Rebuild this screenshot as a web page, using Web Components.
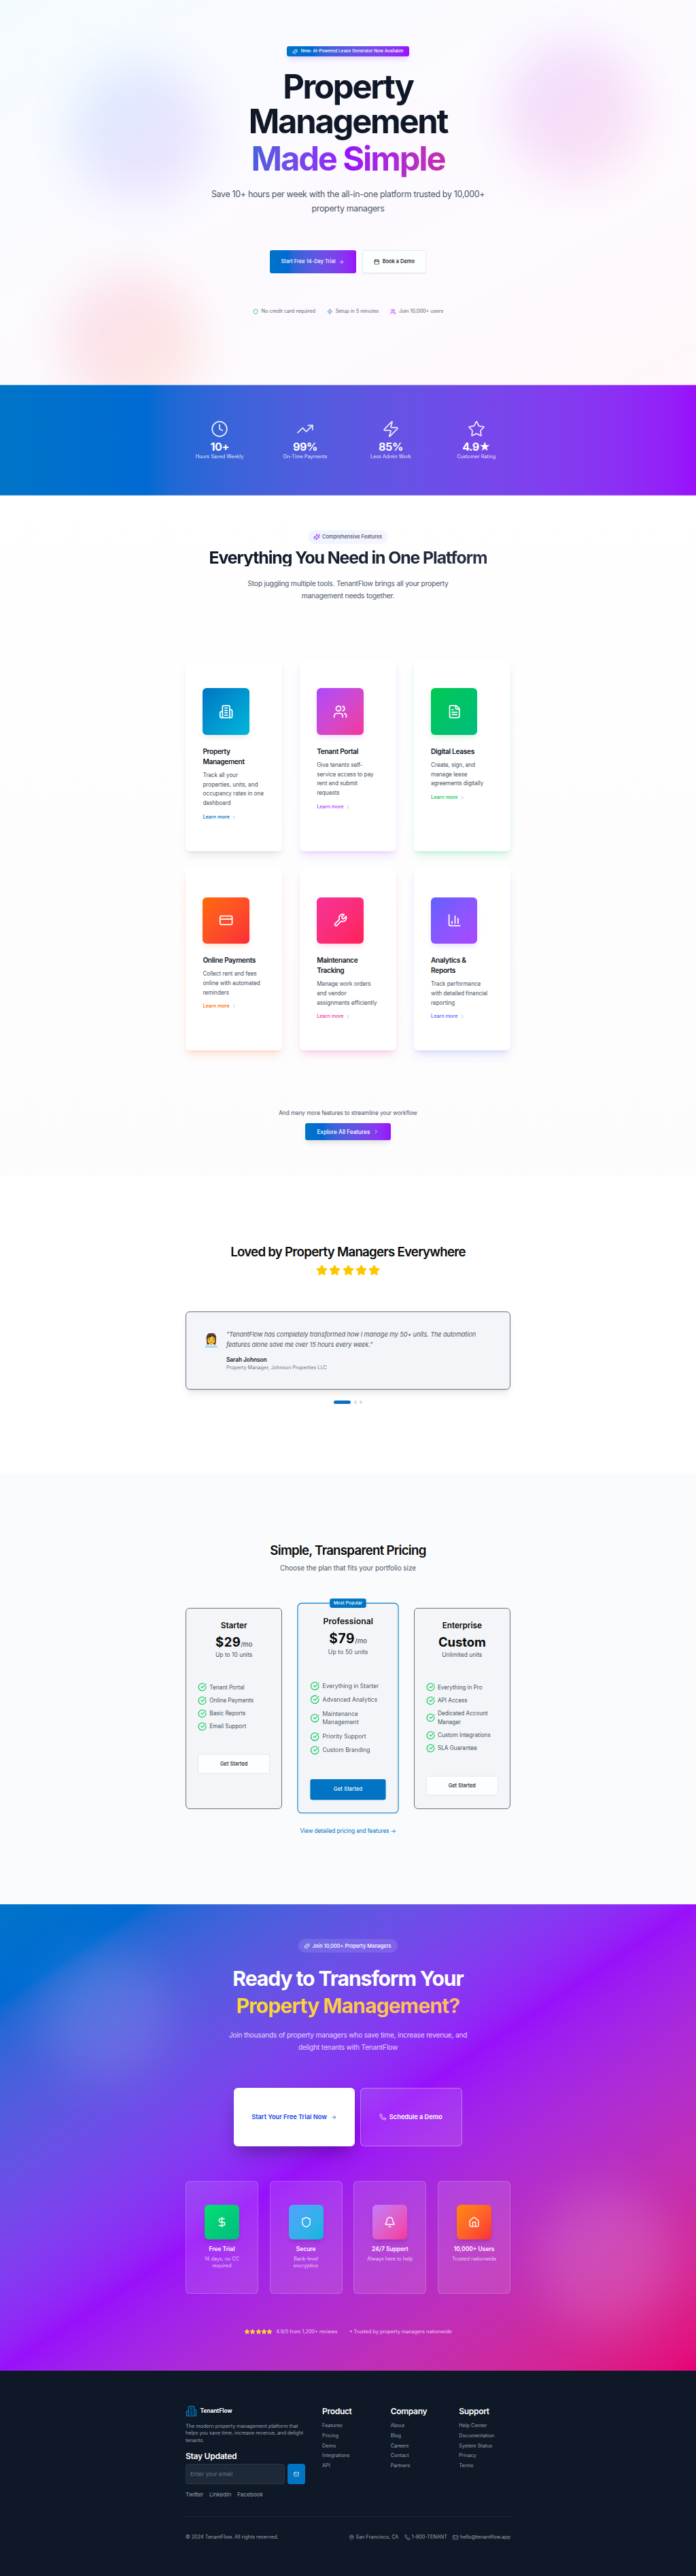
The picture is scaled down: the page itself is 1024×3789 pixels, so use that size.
<!DOCTYPE html>
<html lang="en">
<head>
<meta charset="utf-8">
<title>TenantFlow</title>
<style>
html,body{margin:0;padding:0}
body{font-family:Inter,"Liberation Sans",sans-serif;color:#0a0a0a;background:#fff;width:1024px;
--primary:#0175c3;--primary-wide:oklch(0.53 0.185 238);--purple:#9810fa;--pink:#e60076;--ink:#101828;--muted:#4a5565}
</style>
</head>
<body>
<tf-hero></tf-hero>
<tf-stats></tf-stats>
<tf-features></tf-features>
<tf-testimonials></tf-testimonials>
<tf-pricing></tf-pricing>
<tf-cta></tf-cta>
<tf-footer></tf-footer>
<script>
const BASE = `*{box-sizing:border-box}:host{display:block;box-sizing:border-box}h1,h2,h3,h4,p,ul,li,blockquote{margin:0;padding:0}`;
const define = (name, render) => customElements.define(name, class extends HTMLElement {
  connectedCallback() {
    if (this.shadowRoot) return;
    this.attachShadow({mode:"open"}).innerHTML = render(this);
  }
});

const ICONS = {
  sparkles:'<path d="M9.94 15.5A2 2 0 0 0 8.5 14.06l-6.13-1.58a.5.5 0 0 1 0-.96L8.5 9.94A2 2 0 0 0 9.94 8.5l1.58-6.13a.5.5 0 0 1 .96 0L14.06 8.5A2 2 0 0 0 15.5 9.94l6.13 1.58a.5.5 0 0 1 0 .96L15.5 14.06a2 2 0 0 0-1.44 1.44l-1.58 6.13a.5.5 0 0 1-.96 0z"/><path d="M20 3v4M22 5h-4M4 17v2M5 18H3"/>',
  arrow:'<path d="M5 12h14M12 5l7 7-7 7"/>',
  calendar:'<path d="M8 2v4M16 2v4"/><rect width="18" height="18" x="3" y="4" rx="2"/><path d="M3 10h18"/>',
  shield:'<path d="M20 13c0 5-3.5 7.5-7.66 8.95a1 1 0 0 1-.67-.01C7.5 20.5 4 18 4 13V6a1 1 0 0 1 1-1c2 0 4.5-1.2 6.24-2.72a1.17 1.17 0 0 1 1.52 0C14.51 3.81 17 5 19 5a1 1 0 0 1 1 1z"/>',
  zap:'<path d="M4 14a1 1 0 0 1-.78-1.63l9.9-10.2a.5.5 0 0 1 .86.46l-1.92 6.02A1 1 0 0 0 13 10h7a1 1 0 0 1 .78 1.63l-9.9 10.2a.5.5 0 0 1-.86-.46l1.92-6.02A1 1 0 0 0 11 14z"/>',
  users:'<path d="M16 21v-2a4 4 0 0 0-4-4H6a4 4 0 0 0-4 4v2"/><circle cx="9" cy="7" r="4"/><path d="M22 21v-2a4 4 0 0 0-3-3.87M16 3.13a4 4 0 0 1 0 7.75"/>',
  clock:'<circle cx="12" cy="12" r="10"/><path d="M12 6v6l4 2"/>',
  trend:'<path d="M22 7l-8.5 8.5-5-5L2 17"/><path d="M16 7h6v6"/>',
  star:'<path d="M11.53 2.3a.53.53 0 0 1 .95 0l2.31 4.68a2.12 2.12 0 0 0 1.6 1.16l5.16.76a.53.53 0 0 1 .3.9l-3.74 3.64a2.12 2.12 0 0 0-.61 1.88l.88 5.14a.53.53 0 0 1-.77.56l-4.62-2.43a2.12 2.12 0 0 0-1.97 0L6.4 21.01a.53.53 0 0 1-.77-.56l.88-5.14a2.12 2.12 0 0 0-.61-1.88L2.16 9.8a.53.53 0 0 1 .29-.91l5.17-.76a2.12 2.12 0 0 0 1.6-1.16z"/>',
  building:'<path d="M6 22V4a2 2 0 0 1 2-2h8a2 2 0 0 1 2 2v18Z"/><path d="M6 12H4a2 2 0 0 0-2 2v6a2 2 0 0 0 2 2h2M18 9h2a2 2 0 0 1 2 2v9a2 2 0 0 1-2 2h-2M10 6h4M10 10h4M10 14h4M10 18h4"/>',
  file:'<path d="M15 2H6a2 2 0 0 0-2 2v16a2 2 0 0 0 2 2h12a2 2 0 0 0 2-2V7Z"/><path d="M14 2v4a2 2 0 0 0 2 2h4M10 9H8M16 13H8M16 17H8"/>',
  card:'<rect width="20" height="14" x="2" y="5" rx="2"/><path d="M2 10h20"/>',
  wrench:'<path d="M14.7 6.3a1 1 0 0 0 0 1.4l1.6 1.6a1 1 0 0 0 1.4 0l3.77-3.77a6 6 0 0 1-7.94 7.94l-6.91 6.91a2.12 2.12 0 0 1-3-3l6.91-6.91a6 6 0 0 1 7.94-7.94l-3.76 3.76z"/>',
  chart:'<path d="M3 3v16a2 2 0 0 0 2 2h16M18 17V9M13 17V5M8 17v-3"/>',
  check:'<path d="M21.8 10A10 10 0 1 1 17 3.34"/><path d="M9 11l3 3L22 4"/>',
  dollar:'<path d="M12 2v20M17 5H9.5a3.5 3.5 0 0 0 0 7h5a3.5 3.5 0 0 1 0 7H6"/>',
  bell:'<path d="M10.27 21a2 2 0 0 0 3.46 0M3.26 15.33A1 1 0 0 0 4 17h16a1 1 0 0 0 .74-1.67C19.41 13.96 18 12.5 18 8A6 6 0 0 0 6 8c0 4.5-1.41 5.96-2.74 7.33"/>',
  home:'<path d="M15 21v-8a1 1 0 0 0-1-1h-4a1 1 0 0 0-1 1v8"/><path d="M3 10a2 2 0 0 1 .71-1.53l7-6a2 2 0 0 1 2.58 0l7 6A2 2 0 0 1 21 10v9a2 2 0 0 1-2 2H5a2 2 0 0 1-2-2z"/>',
  chevron:'<path d="M9 18l6-6-6-6"/>',
  phone:'<path d="M22 16.92v3a2 2 0 0 1-2.18 2 19.79 19.79 0 0 1-8.63-3.07 19.5 19.5 0 0 1-6-6A19.79 19.79 0 0 1 2.12 4.18 2 2 0 0 1 4.11 2h3a2 2 0 0 1 2 1.72c.13.96.36 1.9.7 2.81a2 2 0 0 1-.45 2.11L8.09 9.91a16 16 0 0 0 6 6l1.27-1.27a2 2 0 0 1 2.11-.45c.91.34 1.85.57 2.81.7A2 2 0 0 1 22 16.92z"/>',
  mail:'<rect width="20" height="16" x="2" y="4" rx="2"/><path d="M22 7l-8.97 5.7a1.94 1.94 0 0 1-2.06 0L2 7"/>',
  pin:'<path d="M20 10c0 5-5.54 10.19-7.4 11.8a1 1 0 0 1-1.2 0C9.54 20.19 4 15 4 10a8 8 0 0 1 16 0"/><circle cx="12" cy="10" r="3"/>'
};
define("tf-icon", el => {
  const s = el.getAttribute("size") || 8.5;
  return `<style>${BASE}:host{flex:none;width:${s}px;height:${s}px}svg{display:block;width:100%;height:100%}</style>
  <svg viewBox="0 0 24 24" fill="${el.hasAttribute("filled") ? "currentColor" : "none"}" stroke="currentColor" stroke-width="${el.getAttribute("weight") || 2}" stroke-linecap="round" stroke-linejoin="round">${ICONS[el.getAttribute("name")]}</svg>`;
});

define("tf-hero", () => `<style>${BASE}
:host{position:relative;overflow:hidden;height:566px;background:linear-gradient(to bottom right,#f4fbff,#fcfaff 45%,#fdfaff 60%,#fff7fa)}
.blob{position:absolute;width:204px;height:204px;border-radius:50%;filter:blur(34px)}
.b1{left:103px;top:91px;background:linear-gradient(135deg,#0184ff,#9810fa);opacity:.115}
.b2{left:743px;top:60px;background:linear-gradient(135deg,#9810fa,#f6339a);opacity:.125}
.b3{left:90px;top:400px;background:linear-gradient(135deg,#f6339a,#ff6900);opacity:.13}
main{position:relative;display:flex;flex-direction:column;align-items:center;padding-top:68px}
.badge{display:flex;align-items:center;gap:5.3px;width:180px;height:15px;padding-left:7.5px;border-radius:3px;color:#fff;background:linear-gradient(to right in oklab,var(--primary-wide),var(--purple));font:500 6.4px/15px Inter;white-space:nowrap;box-shadow:0 5px 8px -2px #9810fa33}
h1{margin-top:18.7px;font:700 48.9px/51px Inter;letter-spacing:-.046em;text-align:center;color:var(--ink)}
h1 span{display:block}
h1 .grad{line-height:60.4px;width:478px;letter-spacing:-.044em;color:transparent;background:linear-gradient(to right in oklab,var(--primary-wide),var(--purple) 50%,var(--pink));-webkit-background-clip:text;background-clip:text}
p{margin-top:10.9px;width:420px;font:400 12.4px/21px Inter;letter-spacing:-.3px;text-align:center;color:var(--muted)}
.actions{display:flex;gap:9px;margin-top:51px}
.btn{display:flex;align-items:center;height:34px;border-radius:3px;font:500 7.45px/11px Inter;white-space:nowrap}
.a{width:127px;padding-left:16.7px;gap:4.6px;color:#fff;letter-spacing:.04px;background:linear-gradient(to right in oklab,var(--primary-wide),var(--purple))}
.b{width:94.5px;padding-left:16.6px;gap:4px;background:#fdfeff;border:1px solid #e8eaee;color:#0a0a0a;box-shadow:0 1px 1px #0001}
.trust{display:flex;gap:17px;margin-top:51.4px;height:10.6px;font:400 7.25px/10.6px Inter;color:#5b6473;white-space:nowrap}
.trust div{display:flex;align-items:center;gap:4.3px}
</style>
<div class="blob b1"></div><div class="blob b2"></div><div class="blob b3"></div>
<main>
<div class="badge"><tf-icon name="sparkles" size="8"></tf-icon>New: AI-Powered Lease Generator Now Available</div>
<h1><span>Property</span><span>Management</span><span class="grad">Made Simple</span></h1>
<p>Save 10+ hours per week with the all-in-one platform trusted by 10,000+ property managers</p>
<div class="actions"><div class="btn a">Start Free 14-Day Trial<tf-icon name="arrow"></tf-icon></div><div class="btn b"><tf-icon name="calendar"></tf-icon>Book a Demo</div></div>
<div class="trust"><div><tf-icon name="shield" style="color:#00a63e"></tf-icon>No credit card required</div><div><tf-icon name="zap" style="color:#0175c3"></tf-icon>Setup in 5 minutes</div><div><tf-icon name="users" style="color:#9810fa"></tf-icon>Join 10,000+ users</div></div>
</main>`);

define("tf-stat", el => `<style>${BASE}
:host{flex:1;display:flex;flex-direction:column;align-items:center;color:#fff}
tf-icon{opacity:.88}
b{margin-top:5.5px;font:700 16.2px/17px Inter;letter-spacing:-.03em;white-space:nowrap}
small{margin-top:.8px;font:400 7.25px/10.6px Inter;letter-spacing:-.02px;opacity:.88}
</style><tf-icon name="${el.getAttribute("icon")}" size="26" weight="1.6"></tf-icon><b>${el.getAttribute("value")}</b><small><slot></slot></small>`);
define("tf-stats", () => `<style>${BASE}
:host{height:163px;padding-top:50.5px;background:linear-gradient(to right in oklab,var(--primary-wide),var(--purple));border-top:1px solid #ffffff55;border-bottom:1px solid #ffffff55;background-origin:border-box}
div{display:flex;gap:25.4px;width:478px;margin:0 auto}
</style><div><tf-stat icon="clock" value="10+">Hours Saved Weekly</tf-stat><tf-stat icon="trend" value="99%">On-Time Payments</tf-stat><tf-stat icon="zap" value="85%">Less Admin Work</tf-stat><tf-stat icon="star" value="4.9★">Customer Rating</tf-stat></div>`);

define("tf-feature", el => {
  const [from, to, shade] = el.getAttribute("tones").split(" ");
  return `<style>${BASE}
:host{background:#fff;border-radius:6px;padding:42.5px 20px 42.5px 25.4px;box-shadow:0 8px 13px -3px ${shade},0 3px 5px -3px ${shade}}
.tile{display:flex;align-items:center;justify-content:center;width:68.3px;height:68.3px;border-radius:6px;color:#fff;background:linear-gradient(to bottom right in oklab,${from},${to});box-shadow:0 5px 8px -2px ${shade}}
h3{margin-top:17.2px;font:600 10.2px/15px Inter;letter-spacing:-.35px;color:var(--ink)}
p{margin-top:5.7px;font:400 8.25px/13.9px Inter;letter-spacing:-.07px;color:var(--muted);white-space:nowrap}
a{display:flex;align-items:center;gap:2.6px;margin-top:6.6px;font:500 7.3px/12px Inter;letter-spacing:-.04px;color:${from}}
a tf-icon{color:#99a1af}
</style><div class="tile"><tf-icon name="${el.getAttribute("icon")}" size="21.3"></tf-icon></div>
<h3>${el.getAttribute("heading")}</h3><p>${el.getAttribute("copy")}</p><a>Learn more<tf-icon name="chevron"></tf-icon></a>`;
});
define("tf-features", () => `<style>${BASE}
:host{height:999.5px;padding-top:50.7px;background:linear-gradient(#fff,#fefefe 24%,#fcfcfd)}
section{display:flex;flex-direction:column;align-items:center}
.badge{display:flex;align-items:center;gap:3.2px;width:118px;height:20px;padding-left:7.8px;border-radius:10px;font:500 7.4px/20px Inter;color:#4a5565;background:linear-gradient(to right,#edf5ff,#f9f4ff);white-space:nowrap}
.badge tf-icon{color:#9810fa}
h2{margin-top:8.8px;height:25px;font:700 24.8px/25px Inter;letter-spacing:-1.07px;white-space:nowrap;color:transparent;background:linear-gradient(to right,#101828,#1e2939 75%,#2c3646);-webkit-background-clip:text;background-clip:text}
p{margin-top:16.7px;width:310px;font:400 10.3px/17.5px Inter;letter-spacing:-.23px;text-align:center;color:var(--muted)}
.grid{display:grid;grid-template-columns:repeat(3,1fr);grid-template-rows:282px 267.5px;gap:25.5px;width:478px;margin-top:84.8px}
.more{margin-top:85px;width:auto;font:400 8.25px/14px Inter;letter-spacing:-.056px}
.btn{display:flex;align-items:center;gap:4.5px;margin-top:8px;width:126px;height:25.5px;padding-left:17.4px;border-radius:3px;color:#fff;font:500 8.3px/12px Inter;letter-spacing:-.04px;background:linear-gradient(to right in oklab,var(--primary-wide),var(--purple));box-shadow:0 5px 8px -2px #0002}
</style><section>
<div class="badge"><tf-icon name="sparkles" size="10"></tf-icon>Comprehensive Features</div>
<h2>Everything You Need in One Platform</h2>
<p>Stop juggling multiple tools. TenantFlow brings all your property management needs together.</p>
<div class="grid">
<tf-feature icon="building" tones="#0175c3 #00b8db #00000018" heading="Property<br>Management" copy="Track all your<br>properties, units, and<br>occupancy rates in one<br>dashboard"></tf-feature>
<tf-feature icon="users" tones="#ad46ff #f6339a #ad46ff33" heading="Tenant Portal" copy="Give tenants self-<br>service access to pay<br>rent and submit<br>requests"></tf-feature>
<tf-feature icon="file" tones="#00c950 #00bc7d #00c95033" heading="Digital Leases" copy="Create, sign, and<br>manage lease<br>agreements digitally"></tf-feature>
<tf-feature icon="card" tones="#ff6900 #fb2c36 #ff690033" heading="Online Payments" copy="Collect rent and fees<br>online with automated<br>reminders"></tf-feature>
<tf-feature icon="wrench" tones="#f6339a #ff2056 #f6339a33" heading="Maintenance<br>Tracking" copy="Manage work orders<br>and vendor<br>assignments efficiently"></tf-feature>
<tf-feature icon="chart" tones="#615fff #ad46ff #615fff33" heading="Analytics &amp;amp;<br>Reports" copy="Track performance<br>with detailed financial<br>reporting"></tf-feature>
</div>
<p class="more">And many more features to streamline your workflow</p>
<div class="btn">Explore All Features<tf-icon name="chevron"></tf-icon></div>
</section>`);

define("tf-testimonials", () => `<style>${BASE}
:host{height:438.5px;padding-top:102.9px;background:#fff}
section{display:flex;flex-direction:column;align-items:center}
h2{font:600 18.7px/21px Inter;letter-spacing:-.75px}
.stars{display:flex;gap:2.2px;margin-top:8px;color:#fdc700}
.card{display:flex;gap:8.5px;width:478px;height:114.7px;margin-top:51.5px;padding:25px 24px 25px 25px;border:1px solid #6a7282;border-radius:6px;background:#f3f5f8;box-shadow:0 8px 13px -3px #00000018,0 3px 5px -3px #00000018}
.face{width:25.4px;font:19px/34px "Noto Color Emoji",sans-serif;text-align:center}
blockquote{font:italic 400 9.2px/15px Inter;letter-spacing:-.12px;color:var(--muted);white-space:nowrap}
b{display:block;margin-top:9.4px;font:600 8.3px/12px Inter;letter-spacing:-.02px;color:#171b24}
small{display:block;margin-top:.5px;font:400 7.25px/10.6px Inter;color:#717885}
.dots{display:flex;gap:4.3px;margin-top:16.5px}
i{width:4.3px;height:4.6px;border-radius:3px;background:#d9dce1}i.on{width:25.6px;background:#0c6fc0}
</style><section><h2>Loved by Property Managers Everywhere</h2>
<div class="stars">${'<tf-icon name="star" size="17" filled></tf-icon>'.repeat(5)}</div>
<div class="card"><div class="face">👩‍💼</div><div><blockquote>"TenantFlow has completely transformed how I manage my 50+ units. The automation<br>features alone save me over 15 hours every week."</blockquote><b>Sarah Johnson</b><small>Property Manager, Johnson Properties LLC</small></div></div>
<div class="dots"><i class="on"></i><i></i><i></i></div></section>`);

define("tf-plan", el => {
  const pop = el.hasAttribute("popular");
  return `<style>${BASE}
:host{position:relative;display:flex;flex-direction:column;padding:17.9px 17px 0;border:1px solid ${pop ? "#0175c3" : "#6a7282"};border-radius:6px;background:#f3f5f8;${pop ? "transform:scale(1.05);" : ""}}
.tag{position:absolute;top:-6.6px;left:50%;transform:translateX(-50%);width:51px;height:12.2px;border-radius:3px;background:var(--primary);color:#fff;text-align:center;font:500 6.4px/12.4px Inter}
h3{text-align:center;font:600 11.8px/15px Inter;letter-spacing:-.08px}
.price{margin-top:5.8px;display:flex;justify-content:center;align-items:baseline;font:700 18.5px/20px Inter;height:20px;letter-spacing:${el.getAttribute("price")[0] === "$" ? ".45px" : "-.1px"}}
.price small{font:500 9.2px/10px Inter;letter-spacing:0;color:var(--muted)}
.units{margin-top:3px;text-align:center;font:400 8.45px/12.8px Inter;color:var(--muted)}
ul{list-style:none;display:flex;flex-direction:column;gap:6.4px;margin-top:34.8px}
li{display:flex;align-items:center;gap:4.3px;font:400 8.25px/12.8px Inter;letter-spacing:-.04px;color:var(--muted)}
li tf-icon{color:#00c950;margin:-1px 0}
.btn{margin-top:34.2px;height:29.3px;border-radius:3px;display:flex;align-items:center;justify-content:center;font:500 7.4px/10px Inter;${pop ? "background:var(--primary);color:#fff" : "background:#fdfeff;border:1px solid #e5e7eb;color:#171b24"}}
</style>${pop ? '<div class="tag">Most Popular</div>' : ""}<h3>${el.getAttribute("name")}</h3>
<div class="price">${el.getAttribute("price")}${el.getAttribute("price")[0] === "$" ? "<small>/mo</small>" : ""}</div><div class="units">${el.getAttribute("units")}</div>
<ul>${el.getAttribute("items").split("|").map(t => `<li><tf-icon name="check" size="13"></tf-icon><span>${t}</span></li>`).join("")}</ul><div class="btn">Get Started</div>`;
});
define("tf-pricing", () => `<style>${BASE}
:host{height:634px;padding-top:103px;background:#f9fbfd}
section{display:flex;flex-direction:column;align-items:center}
h2{font:600 18.7px/21px Inter;letter-spacing:-.75px}
p{margin-top:8.2px;font:400 10px/15px Inter;letter-spacing:-.07px;color:var(--muted)}
.grid{display:grid;grid-template-columns:repeat(3,1fr);gap:25.4px;width:478px;height:295.4px;margin-top:51.1px}
a{margin-top:25px;font:400 8.25px/14px Inter;letter-spacing:-.06px;color:var(--primary)}
</style><section><h2>Simple, Transparent Pricing</h2><p>Choose the plan that fits your portfolio size</p>
<div class="grid">
<tf-plan name="Starter" price="$29" units="Up to 10 units" items="Tenant Portal|Online Payments|Basic Reports|Email Support"></tf-plan>
<tf-plan popular name="Professional" price="$79" units="Up to 50 units" items="Everything in Starter|Advanced Analytics|Maintenance<br>Management|Priority Support|Custom Branding"></tf-plan>
<tf-plan name="Enterprise" price="Custom" units="Unlimited units" items="Everything in Pro|API Access|Dedicated Account<br>Manager|Custom Integrations|SLA Guarantee"></tf-plan>
</div><a>View detailed pricing and features →</a></section>`);

define("tf-perk", el => {
  const [from, to] = el.getAttribute("tones").split(" ");
  return `<style>${BASE}
:host{flex:1;display:flex;flex-direction:column;align-items:center;padding-top:34px;height:165.7px;border:1px solid #ffffff2e;border-radius:6px;background:#ffffff1c;color:#fff;text-align:center}
.tile{display:flex;align-items:center;justify-content:center;width:51px;height:51px;border-radius:6px;background:linear-gradient(to bottom right in oklab,${from},${to});box-shadow:0 4px 6px -2px #0003}
b{margin-top:8.5px;font:600 8.45px/12.8px Inter}
small{margin-top:2.5px;font:400 7.25px/10.6px Inter;letter-spacing:-.02px;opacity:.72}
</style><div class="tile"><tf-icon name="${el.getAttribute("icon")}" size="17"></tf-icon></div><b>${el.getAttribute("heading")}</b><small><slot></slot></small>`;
});
define("tf-cta", () => `<style>${BASE}
:host{position:relative;overflow:hidden;height:685.5px;background:linear-gradient(to bottom right in oklab,var(--primary-wide),var(--purple) 50%,var(--pink))}
.blob{position:absolute;border-radius:50%;background:#fff;filter:blur(34px);opacity:.11}
.b1{left:60px;top:66px;width:190px;height:190px}
.b2{left:790px;top:420px;width:204px;height:204px;opacity:.14}
section{position:relative;display:flex;flex-direction:column;align-items:center;padding-top:51.3px;color:#fff}
.badge{display:flex;align-items:center;gap:3.6px;width:146px;height:19.8px;padding-left:8px;border-radius:10px;background:#ffffff1f;font:500 7.4px/19px Inter;white-space:nowrap}
h2{margin-top:17.6px;font:700 30.2px/40px Inter;text-align:center}
h2 span{display:block;letter-spacing:-1.13px}
h2 .y{letter-spacing:-.96px;color:transparent;background:linear-gradient(to right,#fdd92e,#ffb86a);-webkit-background-clip:text;background-clip:text}
p{margin-top:15.5px;width:370px;font:400 10.2px/17.6px Inter;letter-spacing:-.21px;text-align:center;color:#e5d6fc}
.actions{display:flex;gap:8.4px;margin-top:50.9px}
.btn{display:flex;align-items:center;height:85.7px;border-radius:6px;font:600 9.3px/14px Inter;letter-spacing:-.04px;white-space:nowrap}
.w{width:177.4px;padding-left:26px;gap:6.5px;color:#1447e6;background:#fff;box-shadow:0 13px 26px -6px #0005}
.o{width:149.7px;padding-left:26.8px;gap:5px;border:1px solid #ffffff55;background:#ffffff1c}
.perks{display:flex;gap:16.8px;width:478px;margin-top:51px}
.proof{display:flex;gap:17.5px;margin-top:51.1px;font:400 7.3px/10.6px Inter;color:#f1cdf5}
.proof div{display:flex;gap:5px}
.em{display:flex}.em span{font:7.2px/10.6px "Noto Color Emoji",sans-serif;width:8.4px}
</style><div class="blob b1"></div><div class="blob b2"></div><section>
<div class="badge"><tf-icon name="sparkles" size="9"></tf-icon>Join 10,000+ Property Managers</div>
<h2><span>Ready to Transform Your</span><span class="y">Property Management?</span></h2>
<p>Join thousands of property managers who save time, increase revenue, and delight tenants with TenantFlow</p>
<div class="actions"><div class="btn w">Start Your Free Trial Now<tf-icon name="arrow"></tf-icon></div><div class="btn o"><tf-icon name="phone" size="10"></tf-icon>Schedule a Demo</div></div>
<div class="perks"><tf-perk icon="dollar" tones="#05df72 #00bc7d" heading="Free Trial">14 days, no CC<br>required</tf-perk><tf-perk icon="shield" tones="#51a2ff #00b8db" heading="Secure">Bank-level<br>encryption</tf-perk><tf-perk icon="bell" tones="#c27aff #f6339a" heading="24/7 Support">Always here to help</tf-perk><tf-perk icon="home" tones="#ff8904 #fb2c36" heading="10,000+ Users">Trusted nationwide</tf-perk></div>
<div class="proof"><div><span class="em">${"<span>⭐</span>".repeat(5)}</span><span>4.9/5 from 1,200+ reviews</span></div><span>• Trusted by property managers nationwide</span></div>
</section>`);

define("tf-links", el => `<style>${BASE}
h4{font:600 12.1px/17px Inter;letter-spacing:-.36px;color:#fff}
ul{list-style:none;display:flex;flex-direction:column;gap:4.3px;margin-top:8.3px}
li{font:400 7.25px/10.6px Inter}
</style><h4>${el.getAttribute("heading")}</h4><ul>${el.getAttribute("items").split("|").map(t => `<li>${t}</li>`).join("")}</ul>`);
define("tf-footer", () => `<style>${BASE}
:host{height:302.5px;padding-top:51px;background:#0f1826;color:#99a1af}
footer{width:478px;margin:0 auto}
.cols{display:grid;grid-template-columns:175.7px repeat(3,75.2px);column-gap:25.4px;height:138px}
.logo{display:flex;align-items:center;gap:4.4px;height:17px;font:700 8.3px/17px Inter;color:#fff}
.logo tf-icon{color:var(--primary)}
p{margin-top:9.3px;font:400 7.25px/10.6px Inter;white-space:nowrap}
h4{margin-top:8.2px;font:600 12.1px/17px Inter;letter-spacing:-.3px;color:#fff}
.form{display:flex;gap:4.3px;margin-top:3.4px;height:30px}
.in{width:146px;padding-left:6px;border:1px solid #2b3543;border-radius:4px;background:#1e2938;color:#6a7282;font:400 8.2px/28px Inter;letter-spacing:-.02px}
.send{width:25.6px;border-radius:4px;background:var(--primary);color:#fff;display:flex;align-items:center;justify-content:center}
.social{display:flex;gap:8.7px;margin-top:8.6px;font:400 8.2px/12.8px Inter;letter-spacing:-.02px}
.end{display:flex;justify-content:space-between;margin-top:25.5px;padding-top:25px;border-top:1px solid #1b2533;font:400 7.27px/10.6px Inter}
.end>div{display:flex;gap:8.4px}.end>div>span{display:flex;align-items:center;gap:2.2px}
</style><footer><div class="cols"><div>
<div class="logo"><tf-icon name="building" size="17"></tf-icon>TenantFlow</div>
<p>The modern property management platform that<br>helps you save time, increase revenue, and delight<br>tenants.</p>
<h4>Stay Updated</h4><div class="form"><div class="in">Enter your email</div><div class="send"><tf-icon name="mail"></tf-icon></div></div>
<div class="social"><span>Twitter</span><span>LinkedIn</span><span>Facebook</span></div></div>
<tf-links heading="Product" items="Features|Pricing|Demo|Integrations|API"></tf-links><tf-links heading="Company" items="About|Blog|Careers|Contact|Partners"></tf-links><tf-links heading="Support" items="Help Center|Documentation|System Status|Privacy|Terms"></tf-links></div>
<div class="end"><span>© 2024 TenantFlow. All rights reserved.</span><div><span><tf-icon name="pin"></tf-icon>San Francisco, CA</span><span><tf-icon name="phone"></tf-icon>1-800-TENANT</span><span><tf-icon name="mail"></tf-icon>hello@tenantflow.app</span></div></div>
</footer>`);
</script>
</body>
</html>
